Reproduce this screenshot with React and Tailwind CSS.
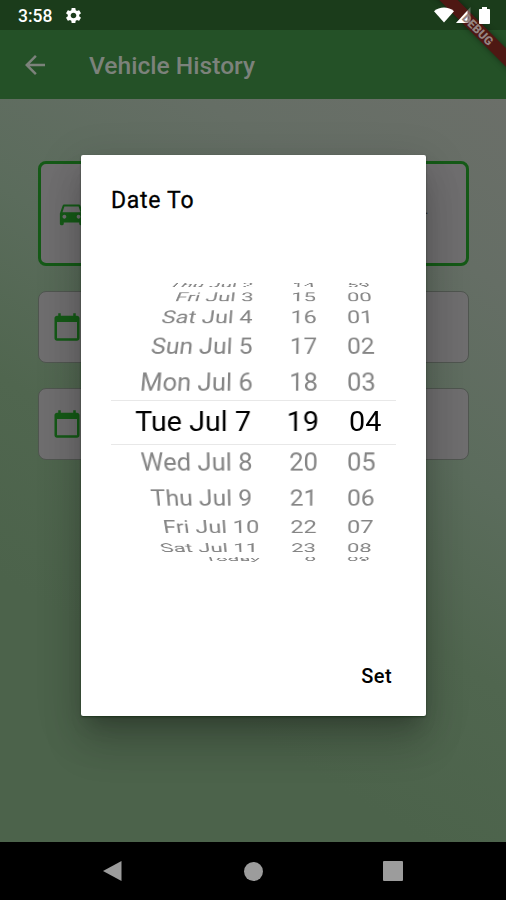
import { MdArrowBack, MdCalendarToday, MdDirectionsCar, MdSettings } from 'react-icons/md';

// One entry per visible row of the wheel, from top to bottom
const wheelRows = [
  { date: 'Thu Jul 2', hour: '14', minute: '59', height: 8, angle: 77, scale: 0.79, shift: 1 },
  { date: 'Fri Jul 3', hour: '15', minute: '00', height: 16, angle: 62, scale: 0.85, shift: 1 },
  { date: 'Sat Jul 4', hour: '16', minute: '01', height: 24, angle: 47, scale: 0.9, shift: 0 },
  { date: 'Sun Jul 5', hour: '17', minute: '02', height: 34, angle: 31, scale: 0.95, shift: 0 },
  { date: 'Mon Jul 6', hour: '18', minute: '03', height: 38, angle: 16, scale: 0.985, shift: -0.5 },
  { date: 'Tue Jul 7', hour: '19', minute: '04', height: 42, angle: 0, scale: 1.025, shift: -2, selected: true },
  { date: 'Wed Jul 8', hour: '20', minute: '05', height: 37, angle: -16, scale: 0.985, shift: 0 },
  { date: 'Thu Jul 9', hour: '21', minute: '06', height: 35, angle: -31, scale: 0.95, shift: -0.5 },
  { date: 'Fri Jul 10', hour: '22', minute: '07', height: 24, angle: -47, scale: 0.905, shift: 6 },
  { date: 'Sat Jul 11', hour: '23', minute: '08', height: 17, angle: -62, scale: 0.85, shift: 5 },
  { date: 'Today', hour: '0', minute: '09', height: 6, angle: -78, scale: 0.79, shift: 7 },
];

const StatusBar = () => (
  <div className="flex h-[30px] items-center bg-[#1b3c1b] pl-[18px] pr-[16px] text-white">
    <span className="mt-[3px] text-[17.5px] font-medium leading-none">3:58</span>
    <MdSettings className="ml-[12px] mt-px size-[19px]" />
    <div className="relative z-20 ml-auto flex items-center">
      <svg width="20" height="16" viewBox="0 0 20 16" fill="currentColor">
        <path d="M0 4.2C5.5-.6 14.5-.6 20 4.2L10 15.5Z" />
      </svg>
      <svg width="16" height="16" viewBox="0 0 16 16" className="ml-[2.5px]">
        <path d="M0 16 14.5 0V16Z" fill="#fff" fillOpacity=".3" />
        <path d="M0 16 11.5 3.5V16Z" fill="#fff" />
      </svg>
      <svg width="11" height="17" viewBox="0 0 11 17" fill="currentColor" className="ml-[7px]">
        <path d="M3 0h5v2h2c.6 0 1 .4 1 1v13c0 .6-.4 1-1 1H1c-.6 0-1-.4-1-1V3c0-.6.4-1 1-1h2Z" />
      </svg>
    </div>
  </div>
);

const DebugBanner = () => (
  <div className="pointer-events-none absolute right-0 top-0 z-10 size-[80px] overflow-hidden">
    <div className="absolute left-[-8px] top-[22.5px] h-[13px] w-[120px] rotate-45 bg-[#4e1813] shadow-[0_0_6px_rgba(0,0,0,0.4)]" />
  </div>
);

// The label stays above the status icons, the ribbon itself below them
const DebugLabel = () => (
  <div className="pointer-events-none absolute right-0 top-0 z-30 size-[80px] overflow-hidden">
    <div className="absolute left-[-8px] top-[22.5px] flex h-[13px] w-[120px] rotate-45 items-center justify-center text-[12px] font-black leading-none text-[#958481]">
      DEBUG
    </div>
  </div>
);

const DateField = () => (
  <div className="flex h-[72px] items-center rounded-lg border border-[#505650] bg-[#6f6e6f] pl-[13.5px]">
    <MdCalendarToday className="size-[30px] text-[#155a17]" />
  </div>
);

const WheelRow = ({ row }) => {
  // Rows under the selected one are seen at a flatter angle
  const depth = row.angle < 0 ? 600 : 330;
  const turn = `perspective(${depth}px) rotateX(${row.angle}deg) scaleX(${row.scale})`;
  return (
    <div
      className={`flex shrink-0 items-center whitespace-nowrap leading-none ${
        row.selected ? 'text-[28px] text-black' : 'text-[26px] text-[#858585]'
      }`}
      style={{ height: row.height }}
    >
      <div className="flex w-[142px] justify-end">
        <span className="origin-right" style={{ transform: `translateX(${row.shift}px) ${turn}` }}>
          {row.date}
        </span>
      </div>
      <div className="ml-[35px] flex w-[30px] justify-end">
        <span className="origin-center" style={{ transform: turn }}>
          {row.hour}
        </span>
      </div>
      <div className={row.selected ? 'ml-[31px]' : 'ml-[29px]'}>
        <span className="inline-block origin-left" style={{ transform: turn }}>
          {row.minute}
        </span>
      </div>
    </div>
  );
};

const DateDialog = () => (
  <div className="absolute left-[81px] top-[155px] flex h-[561px] w-[345px] flex-col rounded-[2px] bg-white px-[30px] shadow-[0_1px_2px_rgba(0,30,0,0.5),0_14px_19px_-9px_rgba(0,0,0,0.22),0_30px_40px_0px_rgba(0,0,0,0.14),0_11px_44px_6px_rgba(0,0,0,0.11)]">
    <h2 className="mt-[33px] text-[23px] leading-[26px] tracking-[0.7px] text-black [-webkit-text-stroke:0.3px_black]">
      Date To
    </h2>
    <div className="relative mt-[69px] h-[281px] overflow-hidden">
      <div className="-mt-[2px] flex flex-col">
        {wheelRows.map((row) => (
          <WheelRow key={row.date} row={row} />
        ))}
      </div>
      <div className="absolute inset-x-0 top-[117px] h-[45px] border-y border-[#e8e8e8]" />
    </div>
    <button className="mt-auto mb-[27px] mr-[4px] self-end text-[20px] font-medium leading-[26px] tracking-[0.4px] text-black">
      Set
    </button>
  </div>
);

const NavigationBar = () => (
  <div className="flex h-[58px] items-center bg-black pl-[103px] text-[#9c9c9c]">
    <svg width="19" height="22" viewBox="0 0 19 22" fill="currentColor">
      <path d="M18.5 1v20L0 11Z" />
    </svg>
    <div className="ml-[122px] size-[19px] rounded-full bg-current" />
    <div className="ml-[120px] size-[20px] rounded-[1px] bg-current" />
  </div>
);

const App = () => {
  return (
    <div className="relative flex h-[900px] w-[506px] flex-col overflow-hidden bg-black font-['Roboto',sans-serif]">
      <StatusBar />
      <header className="flex h-[69px] items-center bg-[#245127] pl-5 text-[#7c827b]">
        <MdArrowBack className="size-[30px]" />
        <h1 className="ml-[39px] mt-[3px] text-[24.6px] font-medium leading-none">Vehicle History</h1>
      </header>

      <main className="flex h-[743px] flex-col bg-[linear-gradient(212deg,#6b6f69_0%,#656e65_18%,#5b6c5c_38%,#50664f_56%,#4c634b_75%)] px-[37.5px] pt-[62px]">
        <div className="mb-[25px] flex h-[105px] items-center rounded-lg border-[3px] border-[#155a17] bg-[#6f6e6f] pl-[15px]">
          <MdDirectionsCar className="size-[31px] text-[#155a17]" />
          <span className="ml-auto mr-[37px] mb-[9px] text-sm text-[#222]">.</span>
        </div>
        <div className="flex flex-col gap-[25px]">
          <DateField />
          <DateField />
        </div>
      </main>

      <NavigationBar />
      <DateDialog />
      <DebugBanner />
      <DebugLabel />
    </div>
  );
};

export default App;
